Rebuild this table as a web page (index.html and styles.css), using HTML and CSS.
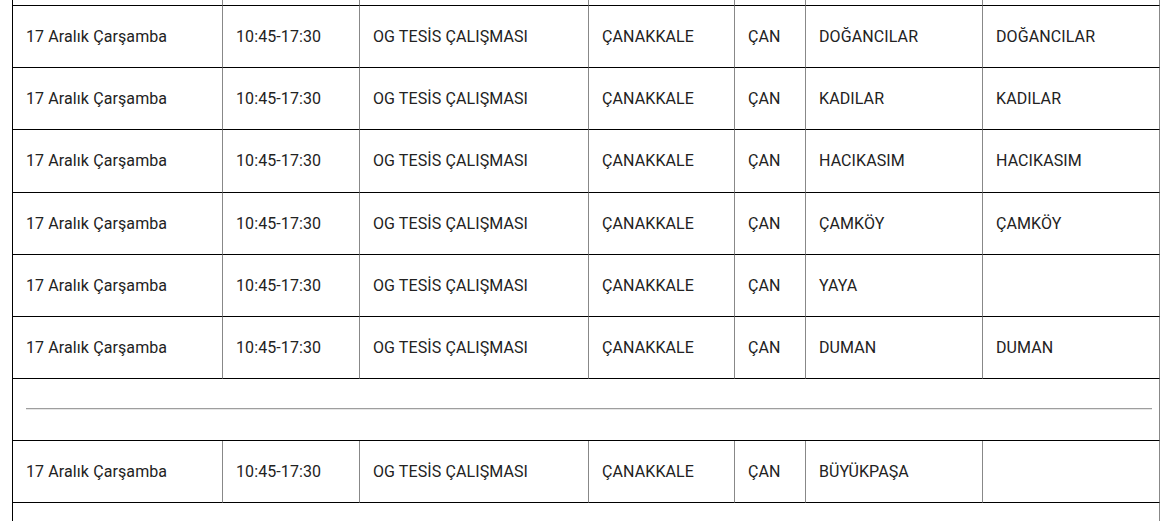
FILE: index.html
```html
<!DOCTYPE html>
<html lang="tr">
<head>
<meta charset="utf-8">
<link rel="stylesheet" href="styles.css">
</head>
<body>
<div class="wrap">
<table class="outages">
  <colgroup>
    <col class="c1"><col class="c2"><col class="c3"><col class="c4"><col class="c5"><col class="c6"><col class="c7">
  </colgroup>
  <tbody>
    <tr class="lead"><td></td><td></td><td></td><td></td><td></td><td></td><td></td></tr>
    <tr><td>17 Aralık Çarşamba</td><td>10:45-17:30</td><td>OG TESİS ÇALIŞMASI</td><td>ÇANAKKALE</td><td>ÇAN</td><td>DOĞANCILAR</td><td>DOĞANCILAR</td></tr>
    <tr><td>17 Aralık Çarşamba</td><td>10:45-17:30</td><td>OG TESİS ÇALIŞMASI</td><td>ÇANAKKALE</td><td>ÇAN</td><td>KADILAR</td><td>KADILAR</td></tr>
    <tr><td>17 Aralık Çarşamba</td><td>10:45-17:30</td><td>OG TESİS ÇALIŞMASI</td><td>ÇANAKKALE</td><td>ÇAN</td><td>HACIKASIM</td><td>HACIKASIM</td></tr>
    <tr><td>17 Aralık Çarşamba</td><td>10:45-17:30</td><td>OG TESİS ÇALIŞMASI</td><td>ÇANAKKALE</td><td>ÇAN</td><td>ÇAMKÖY</td><td>ÇAMKÖY</td></tr>
    <tr><td>17 Aralık Çarşamba</td><td>10:45-17:30</td><td>OG TESİS ÇALIŞMASI</td><td>ÇANAKKALE</td><td>ÇAN</td><td>YAYA</td><td></td></tr>
    <tr><td>17 Aralık Çarşamba</td><td>10:45-17:30</td><td>OG TESİS ÇALIŞMASI</td><td>ÇANAKKALE</td><td>ÇAN</td><td>DUMAN</td><td>DUMAN</td></tr>
    <tr class="sep"><td colspan="7"><hr class="rule"></td></tr>
    <tr><td>17 Aralık Çarşamba</td><td>10:45-17:30</td><td>OG TESİS ÇALIŞMASI</td><td>ÇANAKKALE</td><td>ÇAN</td><td>BÜYÜKPAŞA</td><td></td></tr>
    <tr class="sep"><td colspan="7"></td></tr>
  </tbody>
</table>
</div>
</body>
</html>
```
FILE: styles.css
```css
html, body {
  margin: 0;
  padding: 0;
  background: #fff;
}
.wrap {
  padding-left: 12px;
}
.outages {
  margin-top: -56px;
  width: 1148px;
  table-layout: fixed;
  border-collapse: separate;
  border-spacing: 0;
  font-family: Roboto, "Liberation Sans", sans-serif;
  font-size: 16px;
  letter-spacing: 0.1px;
  color: #222;
}
.c1 { width: 211px; }
.c2 { width: 137px; }
.c3 { width: 229px; }
.c4 { width: 146px; }
.c5 { width: 71px; }
.c6 { width: 177px; }
.c7 { width: 177px; }
.outages td {
  box-sizing: border-box;
  height: 62.125px;
  padding: 0 8px 0 13px;
  vertical-align: middle;
  border-bottom: 1px solid #000;
  border-right: 1px solid #888;
  white-space: nowrap;
  overflow: hidden;
}
.outages td:first-child {
  border-left: 1px solid #000;
}
.outages tr.sep td {
  padding: 0 7px 0 13px;
}
.rule {
  margin: 0;
  border: 0;
  border-top: 1px solid #9e9e9e;
  border-bottom: 1px solid #e6e6e6;
  height: 0;
}
```
